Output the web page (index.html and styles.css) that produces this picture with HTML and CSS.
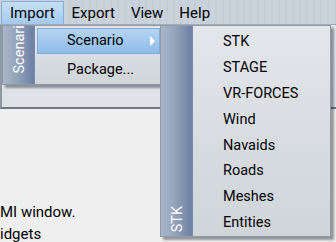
FILE: index.html
```html
<!DOCTYPE html>
<html lang="en">
<head>
    <meta charset="UTF-8">
    <title>Import Menu</title>
    <link rel="stylesheet" href="styles.css">
</head>
<body>
    <div class="menubar">
        <span class="menu-item open">Import</span>
        <span class="menu-item">Export</span>
        <span class="menu-item">View</span>
        <span class="menu-item">Help</span>
    </div>

    <div class="window">
        <div class="toolbar"></div>
        <div class="content">
            <p>MI window.</p>
            <p>idgets</p>
        </div>
    </div>

    <!-- Import dropdown -->
    <div class="dropdown import-menu">
        <div class="side"><span class="side-label">Scenario</span></div>
        <ul class="items">
            <li class="item active">Scenario <span class="arrow"></span></li>
            <li class="item">Package...</li>
        </ul>
    </div>

    <!-- Scenario submenu -->
    <div class="dropdown scenario-menu">
        <div class="side"><span class="side-label">STK</span></div>
        <ul class="items">
            <li class="item">STK</li>
            <li class="item">STAGE</li>
            <li class="item">VR-FORCES</li>
            <li class="item">Wind</li>
            <li class="item">Navaids</li>
            <li class="item">Roads</li>
            <li class="item">Meshes</li>
            <li class="item">Entities</li>
        </ul>
    </div>
</body>
</html>
```

FILE: styles.css
```css
body {
    margin: 0;
    width: 336px;
    height: 242px;
    overflow: hidden;
    position: relative;
    font-family: Roboto, "Liberation Sans", sans-serif;
    font-size: 15px;
    color: #000000;
    background: #eeeeee;
}

.menubar {
    display: flex;
    height: 24px;
    padding-left: 1px;
    border-bottom: 1px solid #a4acb8;
    background: repeating-linear-gradient(90deg, #cad2dc 0 5px, #c5cdd8 5px 7px);
}

.menu-item {
    padding: 0 8px;
    line-height: 22px;
    margin-top: 2px;
}

.menu-item.open {
    margin-top: 1px;
    border: 1px solid #86aed6;
    border-bottom: 0;
    background: linear-gradient(#c6def5, #a3caef);
}

.window {
    display: flex;
    flex-direction: column;
    height: 220px;
}

.toolbar {
    height: 82px;
    border-left: 2px solid #8e97a3;
    background: #dfe3e8;
    border-bottom: 2px solid #6e7782;
}

.content {
    flex: 1;
    display: flex;
    flex-direction: column;
    justify-content: flex-end;
    background: #efefef;
}

.content p {
    margin: 0;
    line-height: 22px;
}

.dropdown {
    position: absolute;
    top: 25px;
    display: flex;
    border: 1px solid #8f99a7;
    background: linear-gradient(#e3e6ea, #d0d5da);
    box-shadow: 3px 3px 2px rgba(40, 44, 52, 0.45);
}

.side {
    width: 32px;
    display: flex;
    justify-content: center;
    overflow: hidden;
    background: linear-gradient(90deg, #aab5c8 0, #98a6bd 12px, #8293b0 22px, #6d81a4 30px, #7a8dab 32px);
}

.side-label {
    writing-mode: vertical-rl;
    transform: rotate(180deg);
    color: #ffffff;
    font-size: 14.5px;
    white-space: nowrap;
}

.items {
    list-style: none;
    margin: 0;
    padding: 0;
    flex: 1;
}

.item {
    position: relative;
    font-size: 14.5px;
}

.import-menu {
    left: 2px;
    width: 158px;
    height: 58px;
}

.import-menu .side {
    align-items: flex-end;
    padding-bottom: 11px;
}

.import-menu .items {
    padding: 2px 1px 0 2px;
}

.import-menu .item {
    height: 26px;
    line-height: 26px;
    margin-bottom: 2px;
    padding-left: 29px;
    border: 1px solid transparent;
}

.import-menu .item.active {
    height: 24px;
    line-height: 24px;
    border-color: #84acd6;
    background: linear-gradient(#b5d4f2, #8fbdea);
}

.arrow {
    position: absolute;
    right: 4px;
    top: 7px;
    border-left: 5px solid #ffffff;
    border-top: 5px solid transparent;
    border-bottom: 5px solid transparent;
}

.scenario-menu {
    left: 160px;
    width: 169px;
    height: 210px;
}

.scenario-menu .side {
    align-items: flex-end;
    padding-bottom: 4px;
}

.scenario-menu .items {
    padding-top: 3px;
}

.scenario-menu .item {
    height: 25.875px;
    line-height: 25.875px;
    padding-left: 30px;
}
```
